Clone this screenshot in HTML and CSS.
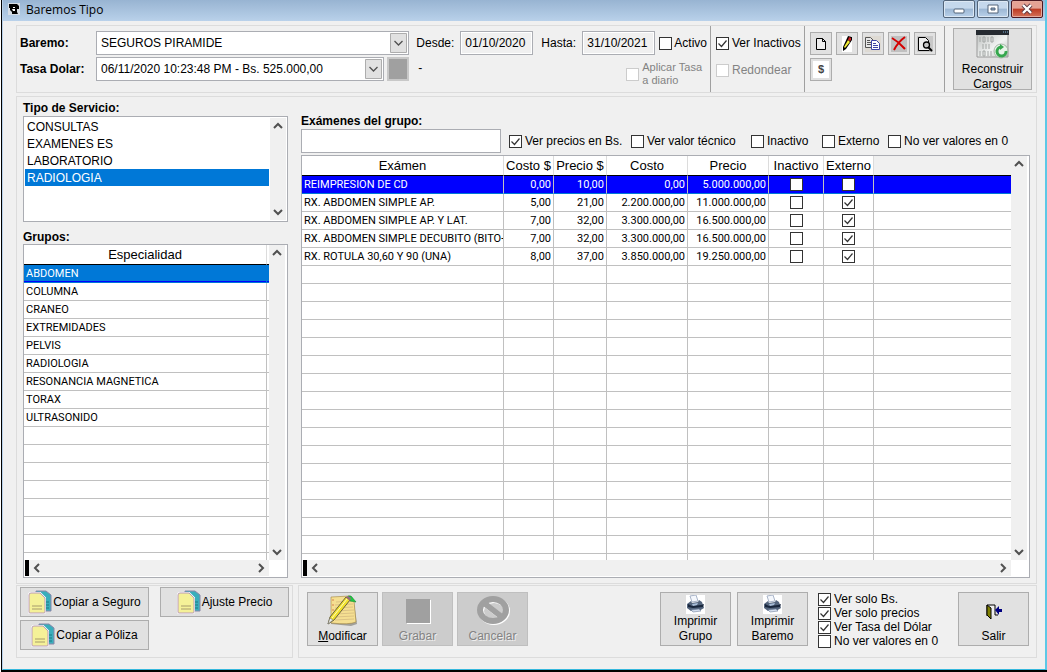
FILE: index.html
```html
<!DOCTYPE html>
<html lang="es">
  <head>
    <meta charset="UTF-8" />
    <meta name="viewport" content="width=device-width, initial-scale=1.0" />
    <title>Baremos Tipo</title>
    <link rel="stylesheet" href="styles.css" />
  </head>
  <body>
    <svg class="simbolos" aria-hidden="true">
      <symbol id="copiar" viewBox="0 0 24 24">
        <path d="M8 1h10l5 4v16H8z" fill="#3aaebb" stroke="#8a86a8" />
        <path d="M18 12h3M18 15h3M18 18h3" stroke="#1c7884" />
        <path d="M1 5q0-2 2-2h9l5 5v14q0 1-1 1H2q-1 0-1-1z" fill="#f5f198" stroke="#fff" stroke-width="2" />
        <path d="M1 5q0-2 2-2h9l5 5v14q0 1-1 1H2q-1 0-1-1z" fill="#f5f198" stroke="#b99bb5" />
        <path d="M4 16h10M4 19h10" stroke="#a79b6c" />
      </symbol>
      <symbol id="impresora" viewBox="0 0 19 19">
        <path fill="#fff" d="M0 0h19v19H0z" />
        <path d="M4 1l6-1 2 6-6 1z" fill="#f4f7fc" stroke="#a9b4c8" />
        <path d="M1 9l4-3 1 2 6-1 1-2 3 2 2 6-5 3H5l-4-3z" fill="#53647c" />
        <path d="M2 9l4 2 9-1 3-1-1 3-10 1-5-1z" fill="#18263c" />
        <path d="M6 9l6-1-1 2-4 1z" fill="#a8bdd8" />
        <path d="M5 15l8-1 2 2-8 1z" fill="#d7e1f0" stroke="#71829c" stroke-width=".6" />
      </symbol>
      <symbol id="arriba" viewBox="0 0 16 16"><path d="M4 10l4-4 4 4" fill="none" stroke="#505050" stroke-width="2" /></symbol>
      <symbol id="abajo" viewBox="0 0 16 16"><path d="M4 6l4 4 4-4" fill="none" stroke="#505050" stroke-width="2" /></symbol>
      <symbol id="izquierda" viewBox="0 0 16 16"><path d="M10 4L6 8l4 4" fill="none" stroke="#505050" stroke-width="2" /></symbol>
      <symbol id="derecha" viewBox="0 0 16 16"><path d="M6 4l4 4-4 4" fill="none" stroke="#505050" stroke-width="2" /></symbol>
    </svg>

    <div class="ventana">
      <header class="titulo">
        <svg width="12" height="12" viewBox="0 0 12 12" aria-hidden="true">
          <path fill="#d6dde5" d="M0 0h12v12H0z" />
          <path d="M1 1h8l2 2v3H9v3l1 2H4V9L2 7V5H1z" fill="#000" />
          <path d="M5 4h2v1H5zM4 6h3v2H5z" fill="#fff" />
        </svg>
        <h1>Baremos Tipo</h1>
        <button class="control" aria-label="Minimizar">
          <svg width="12" height="12" viewBox="0 0 12 12"><rect x="1" y="6" width="10" height="4" rx="1" fill="#fff" stroke="#53657a" /></svg>
        </button>
        <button class="control" aria-label="Maximizar">
          <svg width="12" height="12" viewBox="0 0 12 12"><path d="M1 2h10v8H1z" fill="#fff" stroke="#53657a" /><path d="M4 5h4v2H4z" fill="#8fa9c6" stroke="#53657a" /></svg>
        </button>
        <button class="control cerrar" aria-label="Cerrar">
          <svg width="12" height="12" viewBox="0 0 12 12"><path d="M2 2l8 8M10 2l-8 8" stroke="#5b3640" stroke-width="4" /><path d="M2 2l8 8M10 2l-8 8" stroke="#fff" stroke-width="2.400" /></svg>
        </button>
      </header>

      <main>
        <section class="panel superior">
          <div class="filtros">
            <label class="negrita" for="baremo">Baremo:</label>
            <select id="baremo"><option>SEGUROS PIRAMIDE</option></select>
            <div class="fechas">
              <label for="desde">Desde:</label>
              <input type="text" id="desde" value="01/10/2020" />
              <label for="hasta">Hasta:</label>
              <input type="text" id="hasta" value="31/10/2021" />
              <label class="check"><input type="checkbox" />Activo</label>
            </div>
            <label class="negrita" for="tasa">Tasa Dolar:</label>
            <div class="tasa">
              <select id="tasa"><option>06/11/2020 10:23:48 PM - Bs. 525.000,00</option></select>
              <button class="cuadro" aria-label="Tasa" disabled></button>
            </div>
            <div class="aplicar">
              <span>-</span>
              <label class="check pequeno"><input type="checkbox" disabled /><span>Aplicar Tasa<br />a diario</span></label>
            </div>
          </div>
          <div class="opciones">
            <label class="check"><input type="checkbox" checked />Ver Inactivos</label>
            <label class="check inhabilitado"><input type="checkbox" disabled />Redondear</label>
          </div>
          <div class="herramientas">
            <button aria-label="Nuevo">
              <svg width="16" height="16" viewBox="0 0 16 16"><path d="M3.500 2.500h6l3 3v8h-9z" fill="#eee" stroke="#000" /><path d="M9.500 2.500v3h3" fill="none" stroke="#000" /></svg>
            </button>
            <button aria-label="Editar">
              <svg width="16" height="16" viewBox="0 0 16 16"><path fill="#fff" d="M3 0h10v16H3z" /><path d="M9 0l4 1v3l-6 9-3 2V11z" fill="#000" /><path d="M9 4l2 2-5 6-1-1z" fill="#f3ee37" /><path d="M10 1l2 1v2l-1 1-2-1z" fill="#d32020" /></svg>
            </button>
            <button aria-label="Copiar">
              <svg width="16" height="16" viewBox="0 0 16 16"><path fill="#dedad3" d="M0 0h16v16H0z" /><path d="M.5 1.500h5l3 3v7h-8z" fill="#e8e8e8" stroke="#555" /><path d="M2 4.500h3M2 6.500h4M2 8.500h4" stroke="#555" /><path d="M6.500 4.500h5l3 3v6h-8z" fill="#fff" stroke="#3e46a5" /><path d="M8 7.500h3M8 9.500h5M8 11.500h5" stroke="#3e46a5" /></svg>
            </button>
            <button aria-label="Eliminar">
              <svg width="16" height="16" viewBox="0 0 16 16"><path fill="#c0c0c0" d="M0 0h16v16H0z" /><path d="M1 2q7 4 13 11M14 1Q7 6 3 14" fill="none" stroke="#d40000" stroke-width="2" /></svg>
            </button>
            <button aria-label="Buscar">
              <svg width="16" height="16" viewBox="0 0 16 16"><path fill="#c8c8c8" d="M0 0h16v16H0z" /><path d="M12.500 14.500h-11v-13h7l3 3v2" fill="#eee" stroke="#000" /><circle cx="9.500" cy="9" r="3" fill="#c8c8c8" stroke="#000" stroke-width="1.300" /><path d="M11 11l4 4" stroke="#000" stroke-width="2" /></svg>
            </button>
            <button class="dolar">$</button>
          </div>
          <div class="reconstruir">
            <button class="boton">
              <svg width="33" height="29" viewBox="0 0 33 29" aria-hidden="true">
                <defs><linearGradient id="gris" x2="1" y2="1"><stop stop-color="#b9bcbb" /><stop offset=".6" stop-color="#f1f3f2" /><stop offset="1" stop-color="#bbb" /></linearGradient></defs>
                <path d="M1 1h31v26H1z" fill="url(#gris)" stroke="#999" />
                <path d="M0 0h33v5H0z" fill="#252a30" />
                <path d="M27 2h1M29 2h1M31 2h1" stroke="#7fb2d8" />
                <path d="M4 7v5M7 7h2v5H7zM12 7v5M15 7h2v5h-2zM7 14v5M10 14v5M13 14v5M4 21v5M7 21h2v5H7zM12 21v5M15 21v5" fill="none" stroke="#a2a6a4" />
                <circle cx="25" cy="21" r="7" fill="#e7f3e8" stroke="#a5b5a6" />
                <path d="M25 17a4.500 4.500 0 1 0 5 4" fill="none" stroke="#35a74d" stroke-width="3" />
                <path d="M24 14l4 3-4 3z" fill="#35a74d" />
              </svg>
              <span>Reconstruir<br />Cargos</span>
            </button>
          </div>
        </section>

        <section class="panel central">
          <div class="izquierda">
            <label class="negrita" for="servicio">Tipo de Servicio:</label>
            <div class="lista">
              <select id="servicio" size="6">
                <option>CONSULTAS</option>
                <option>EXAMENES ES</option>
                <option>LABORATORIO</option>
                <option selected>RADIOLOGIA</option>
              </select>
              <div class="barra vertical">
                <button aria-label="Subir"><svg><use href="#arriba" /></svg></button>
                <button aria-label="Bajar"><svg><use href="#abajo" /></svg></button>
              </div>
            </div>
            <h2 class="negrita grupos">Grupos:</h2>
            <div class="rejilla">
              <div class="cuerpo">
                <table id="tablaGrupos">
                  <colgroup><col /><col class="margen" /></colgroup>
                  <thead><tr><th>Especialidad</th><td></td></tr></thead>
                  <tbody></tbody>
                </table>
              </div>
              <div class="barra vertical">
                <button aria-label="Subir"><svg><use href="#arriba" /></svg></button>
                <button aria-label="Bajar"><svg><use href="#abajo" /></svg></button>
              </div>
              <div class="barra horizontal">
                <button aria-label="Izquierda"><svg><use href="#izquierda" /></svg></button>
                <button aria-label="Derecha"><svg><use href="#derecha" /></svg></button>
              </div>
            </div>
          </div>

          <div class="derecha">
            <label class="negrita" for="buscar">Exámenes del grupo:</label>
            <div class="busqueda">
              <input type="text" id="buscar" />
              <label class="check precios"><input type="checkbox" checked />Ver precios en Bs.</label>
              <label class="check tecnico"><input type="checkbox" />Ver valor técnico</label>
              <label class="check inactivo"><input type="checkbox" />Inactivo</label>
              <label class="check externo"><input type="checkbox" />Externo</label>
              <label class="check"><input type="checkbox" />No ver valores en 0</label>
            </div>
            <div class="rejilla">
              <div class="cuerpo">
                <table id="tablaExamenes">
                  <colgroup>
                    <col class="c-examen" /><col class="c-costo" /><col class="c-precio" /><col class="c-monto" />
                    <col class="c-monto" /><col class="c-inactivo" /><col class="c-externo" /><col />
                  </colgroup>
                  <thead>
                    <tr><th>Exámen</th><th>Costo $</th><th>Precio $</th><th>Costo</th><th>Precio</th><th>Inactivo</th><th>Externo</th><td class="vacio"></td></tr>
                  </thead>
                  <tbody></tbody>
                </table>
              </div>
              <div class="barra vertical">
                <button aria-label="Subir"><svg><use href="#arriba" /></svg></button>
                <button aria-label="Bajar"><svg><use href="#abajo" /></svg></button>
              </div>
              <div class="barra horizontal">
                <button aria-label="Izquierda"><svg><use href="#izquierda" /></svg></button>
                <button aria-label="Derecha"><svg><use href="#derecha" /></svg></button>
              </div>
            </div>
          </div>
        </section>

        <footer>
          <div class="panel copias">
            <button class="boton"><svg width="24" height="24"><use href="#copiar" /></svg>Copiar a Seguro</button>
            <button class="boton"><svg width="24" height="24"><use href="#copiar" /></svg>Ajuste Precio</button>
            <button class="boton"><svg width="24" height="24"><use href="#copiar" /></svg>Copiar a Póliza</button>
          </div>
          <div class="panel acciones">
            <button class="boton">
              <svg width="32" height="32" viewBox="0 0 32 32" aria-hidden="true">
                <path d="M5 3l20-1 2 5 3 22-6 2-20-2z" fill="#77756b" opacity=".6" />
                <path d="M4 2l19-1 4 5 2 21q-7 3-25 1z" fill="#f5df91" stroke="#a18540" stroke-width=".6" />
                <path d="M9 7l16-1M8 10l18-1M8 13l18-1M8 16l19-1M8 19l19-1M8 22l19-1M8 25l19-1" stroke="#dcc383" />
                <path d="M6 4v24" stroke="#d88050" stroke-dasharray="2 3" />
                <path d="M21 1h3l5 6-6-1z" fill="#20c944" stroke="#118c2a" stroke-width=".6" />
                <path d="M1 29l2-7L19 2l4 3L7 25z" fill="#f2e22d" stroke="#686039" />
                <path d="M5 23L20 4" stroke="#fffbc0" />
                <path d="M19 2l2-1 3 2-1 3z" fill="#956a81" />
                <path d="M1 29l2-6 3 2z" fill="#eee" stroke="#777" stroke-width=".6" />
              </svg>
              <span><u>M</u>odificar</span>
            </button>
            <button class="boton" disabled>
              <svg width="32" height="32" viewBox="0 0 32 32" aria-hidden="true"><path d="M5 5h24v24H5z" fill="#fff" /><path d="M4 4h24v24H4z" fill="#a0a0a0" /></svg>
              <span>Grabar</span>
            </button>
            <button class="boton" disabled>
              <svg width="34" height="32" viewBox="0 0 34 32" aria-hidden="true">
                <g fill="none" stroke-width="6"><g stroke="#fff"><ellipse cx="18" cy="16" rx="13" ry="11" /><path d="M9 9l18 14" /></g><g stroke="#a0a0a0"><ellipse cx="17" cy="15" rx="13" ry="11" /><path d="M8 8l18 14" /></g></g>
              </svg>
              <span>Cancelar</span>
            </button>
            <button class="boton imprimir"><svg width="19" height="19"><use href="#impresora" /></svg><span>Imprimir<br />Grupo</span></button>
            <button class="boton"><svg width="19" height="19"><use href="#impresora" /></svg><span>Imprimir<br />Baremo</span></button>
            <div class="vistas">
              <label class="check"><input type="checkbox" checked />Ver solo Bs.</label>
              <label class="check"><input type="checkbox" checked />Ver solo precios</label>
              <label class="check"><input type="checkbox" checked />Ver Tasa del Dólar</label>
              <label class="check"><input type="checkbox" />No ver valores en 0</label>
            </div>
            <button class="boton salir">
              <svg width="16" height="16" viewBox="0 0 16 16" aria-hidden="true">
                <path d="M1 12V1h8v10h3" fill="#eee" stroke="#000" />
                <path d="M1 1l4 3v11l-4-4z" fill="#808000" stroke="#000" />
                <path d="M9 6l4-4v3h3v3h-3v3z" fill="#000080" />
              </svg>
              <span>Salir</span>
            </button>
          </div>
        </footer>
      </main>
    </div>

    <script>
      const grupos = ["ABDOMEN", "COLUMNA", "CRANEO", "EXTREMIDADES", "PELVIS", "RADIOLOGIA", "RESONANCIA MAGNETICA", "TORAX", "ULTRASONIDO"];

      const examenes = [
        ["REIMPRESION DE CD", "0,00", "10,00", "0,00", "5.000.000,00", false, false],
        ["RX. ABDOMEN SIMPLE AP.", "5,00", "21,00", "2.200.000,00", "11.000.000,00", false, true],
        ["RX. ABDOMEN SIMPLE AP. Y LAT.", "7,00", "32,00", "3.300.000,00", "16.500.000,00", false, true],
        ["RX. ABDOMEN SIMPLE DECUBITO (BITO+", "7,00", "32,00", "3.300.000,00", "16.500.000,00", false, true],
        ["RX. ROTULA 30,60 Y 90 (UNA)", "8,00", "37,00", "3.850.000,00", "19.250.000,00", false, true],
      ];

      // Llena la tabla y completa con filas vacias hasta el fondo
      function llenar(selector, datos, columnas, total) {
        const tbody = document.querySelector(selector + " tbody");
        for (let i = 0; i < total; i++) {
          const fila = tbody.insertRow();
          for (let j = 0; j < columnas; j++) {
            const celda = fila.insertCell();
            const valor = datos[i] ? datos[i][j] : undefined;
            if (typeof valor === "boolean") {
              const caja = document.createElement("input");
              caja.type = "checkbox";
              caja.checked = valor;
              caja.setAttribute("aria-label", (j == 5 ? "Inactivo " : "Externo ") + datos[i][0]);
              celda.appendChild(caja);
            } else if (valor) {
              celda.textContent = valor;
            }
          }
        }
        tbody.rows[0].className = "seleccionada";
      }

      llenar("#tablaGrupos", grupos.map((g) => [g]), 2, 60);
      llenar("#tablaExamenes", examenes, 8, 60);
    </script>
  </body>
</html>
```

FILE: styles.css
```css
* {
  box-sizing: border-box;
  margin: 0;
  padding: 0;
}

body {
  background-color: #000;
  border-left: 1px solid #fff;
  padding: 0 0 2px 1px;
  font-family: "Liberation Sans", Arial, sans-serif;
  font-size: 12px;
  line-height: 15px;
  color: #000;
}

button,
input,
select {
  font: inherit;
  color: inherit;
  border-radius: 0;
}

svg {
  display: block;
  flex: none;
}

.simbolos {
  display: none;
}

.ventana {
  display: flex;
  flex-direction: column;
  height: calc(100vh - 2px);
  min-height: 500px;
  background-color: #f0f0f0;
  border: 1px solid #b9d1ea;
  border-top: none;
  border-right: 2px solid #5cc8e6;
  border-bottom: 1px solid #35b8dd;
}

/* ---------BARRA DE TITULO------------*/

.titulo {
  display: flex;
  align-items: flex-start;
  gap: 2px;
  height: 21px;
  padding: 0 2px 0 5px;
  background: linear-gradient(#98b4d2, #b9d1ea);
}

.titulo > svg {
  margin-top: 3px;
}

.titulo h1 {
  flex: 1;
  padding-left: 4px;
  font-family: "Open Sans", sans-serif;
  font-size: 12px;
  font-weight: 400;
  line-height: 20px;
}

.control {
  display: flex;
  align-items: center;
  justify-content: center;
  width: 32px;
  height: 18px;
  background: linear-gradient(#c5d8ec 45%, #9cb7d4 50%, #b9d1ea);
  border: 1px solid #53657a;
  border-radius: 2px;
  box-shadow: inset 0 0 0 1px #dce8f4;
}

.cerrar {
  background: linear-gradient(#e5a294 45%, #bd3a22 50%, #d4725a);
  border-color: #4c1720;
  box-shadow: inset 0 0 0 1px #e5a99c;
}

/* ---------CONTROLES------------*/

main {
  flex: 1;
  display: flex;
  flex-direction: column;
  min-height: 0;
  padding: 4px 8px 11px 13px;
}

.panel {
  border: 1px solid #dcdcdc;
}

.negrita {
  font-size: 12px;
  font-weight: 700;
}

input[type="checkbox"] {
  appearance: none;
  flex: none;
  width: 13px;
  height: 13px;
  background: #fff;
  border: 1px solid #333;
}

input[type="checkbox"]:checked {
  background: #fff url("data:image/svg+xml,%3Csvg xmlns='http://www.w3.org/2000/svg' width='11' height='11'%3E%3Cpath d='M1.5 5.5l3 3 5-6' fill='none' stroke='%23333' stroke-width='1.2'/%3E%3C/svg%3E");
}

input[type="checkbox"]:disabled {
  border-color: #ccc;
}

input[type="text"] {
  height: 24px;
  background-color: #fff;
  border: 1px solid #abadb3;
}

.check {
  display: flex;
  align-items: center;
  gap: 3px;
  white-space: nowrap;
}

.boton {
  display: flex;
  align-items: center;
  justify-content: center;
  background-color: #e1e1e1;
  border: 1px solid #adadad;
  white-space: nowrap;
}

.boton:disabled {
  background-color: #ccc;
  border-color: #bfbfbf;
  color: #838383;
  text-shadow: 1px 1px #eee;
}

/* ---------PANEL SUPERIOR------------*/

.superior {
  display: flex;
}

.filtros {
  flex: 1;
  display: grid;
  grid-template-columns: 69px 1fr auto;
  gap: 2px 7px;
  align-items: start;
  align-content: start;
  padding: 5px 3px 0;
}

.filtros > .negrita {
  line-height: 24px;
}

.filtros select {
  appearance: none;
  width: 100%;
  height: 24px;
  padding: 0 24px 0 4px;
  background: #fff url("data:image/svg+xml,%3Csvg xmlns='http://www.w3.org/2000/svg' width='17' height='20'%3E%3Cpath d='M.5.5h16v19H.5z' fill='%23e1e1e1' stroke='%23adadad'/%3E%3Cpath d='M4.5 8l4 4 4-4' fill='none' stroke='%23505050' stroke-width='1.3'/%3E%3C/svg%3E") no-repeat right 1px center;
  border: 1px solid #abadb3;
}

.fechas {
  display: flex;
  align-items: center;
}

.fechas > label:first-child {
  width: 44px;
}

.fechas > label:nth-of-type(2) {
  width: 41px;
  margin-left: 8px;
}

.fechas input[type="text"] {
  width: 73px;
  padding-left: 4px;
  background-color: #f0f0f0;
  box-shadow: inset 0 0 0 1px #fff;
}

.fechas .check {
  margin-left: 4px;
  gap: 2px;
}

.tasa {
  display: flex;
  gap: 3px;
}

.cuadro {
  flex: none;
  width: 22px;
  height: 24px;
  background-color: #a0a0a0;
  border: 2px solid #c8c8c8;
}

.aplicar {
  display: flex;
  justify-content: space-between;
  padding: 4px 5px 0 2px;
}

.pequeno {
  font-size: 11px;
  line-height: 13px;
  color: #838383;
}

.opciones {
  display: flex;
  flex-direction: column;
  gap: 12px;
  width: 94px;
  padding: 10px 0 0 5px;
  border-left: 1px solid #a0a0a0;
}

.inhabilitado {
  color: #838383;
}

.herramientas {
  display: flex;
  flex-wrap: wrap;
  align-content: flex-start;
  gap: 3px 4px;
  width: 140px;
  padding: 6px 3px 0 5px;
  border-left: 1px solid #a0a0a0;
}

.herramientas button {
  display: flex;
  align-items: center;
  justify-content: center;
  width: 22px;
  height: 23px;
  background-color: #e1e1e1;
  border: 1px solid #adadad;
}

.herramientas .dolar {
  background-color: #fff;
  box-shadow: inset 0 0 0 2px #e1e1e1;
  font-size: 11px;
  font-weight: 700;
  color: #444;
}

.reconstruir {
  padding: 2px 4px 2px 8px;
  border-left: 1px solid #a0a0a0;
}

.reconstruir .boton {
  flex-direction: column;
  justify-content: flex-start;
  gap: 3px;
  width: 79px;
  height: 62px;
  padding-top: 1px;
}

/* ---------PANEL CENTRAL------------*/

.central {
  flex: 1;
  display: flex;
  gap: 13px;
  min-height: 0;
  margin-top: 3px;
  padding: 4px 6px 5px;
}

.izquierda {
  display: flex;
  flex-direction: column;
  width: 265px;
}

.lista {
  display: flex;
  flex: none;
  height: 106px;
  padding: 1px;
  background-color: #fff;
  border: 1px solid #abadb3;
}

.lista select {
  flex: 1;
  margin-right: 1px;
  overflow: hidden;
  border: none;
  outline: none;
}

.lista option {
  min-height: 17px;
  padding: 2px 2px 0;
}

.lista option:checked {
  background: #0078d7 linear-gradient(#0078d7, #0078d7);
  color: #fff;
}

.grupos {
  margin-top: 8px;
  line-height: 14px;
}

.derecha {
  flex: 1;
  display: flex;
  flex-direction: column;
  min-width: 0;
  padding-top: 13px;
}

.busqueda {
  display: flex;
  align-items: center;
  margin-bottom: 2px;
}

#buscar {
  flex: 0 1 200px;
  min-width: 80px;
  margin-right: 8px;
}

.precios {
  width: 122px;
}

.tecnico {
  width: 120px;
}

.inactivo {
  width: 71px;
}

.externo {
  width: 66px;
}

.rejilla {
  flex: 1;
  display: grid;
  grid-template-columns: 1fr 16px;
  grid-template-rows: 1fr 16px;
  min-height: 0;
  padding: 0 2px 1px 0;
  background-color: #fff;
  border: 1px solid #abadb3;
}

.cuerpo {
  min-height: 0;
  overflow: hidden;
}

.barra {
  display: flex;
  justify-content: space-between;
  background-color: #f0f0f0;
}

.barra button {
  width: 16px;
  height: 16px;
  background: none;
  border: none;
}

.barra svg {
  width: 16px;
  height: 16px;
}

.vertical {
  flex-direction: column;
  width: 16px;
}

.horizontal {
  margin-left: 1px;
  border-left: 4px solid #000;
}

/* ---------TABLAS------------*/

table {
  width: 100%;
  table-layout: fixed;
  border-collapse: separate;
  border-spacing: 0;
}

th {
  height: 20px;
  font-size: 13px;
  font-weight: 400;
  line-height: 19px;
  white-space: nowrap;
  border-right: 1px solid #dcdcdc;
}

thead th,
thead td {
  border-bottom: 1px solid #000;
}

.vacio {
  background-color: #f0f0f0;
}

tbody td {
  height: 18px;
  padding: 0 2px;
  overflow: hidden;
  font-family: Roboto, sans-serif;
  font-size: 11px;
  line-height: 17px;
  white-space: nowrap;
  border-right: 1px solid #c0c0c0;
  border-bottom: 1px solid #c0c0c0;
}

tbody td:last-child {
  border-right: none;
}

#tablaExamenes td:first-child {
  padding-right: 0;
}

td input {
  display: block;
  margin: 0 auto;
}

.margen {
  width: 2px;
}

#tablaGrupos tbody td:last-child {
  padding: 0;
}

#tablaGrupos .seleccionada td {
  background-color: #0078d7;
  border-color: #0078d7;
  box-shadow: inset 0 -1px #0000ff;
  color: #fff;
}

#tablaExamenes td:nth-child(n + 2) {
  text-align: right;
}

#tablaExamenes .seleccionada td {
  background-color: #0000ff;
  border-bottom-color: #0078d7;
  color: #fff;
}

.c-examen {
  width: 202px;
}

.c-costo,
.c-externo {
  width: 50px;
}

.c-precio {
  width: 53px;
}

.c-monto {
  width: 81px;
}

.c-inactivo {
  width: 55px;
}

/* ---------PANEL INFERIOR------------*/

footer {
  display: flex;
  gap: 5px;
  margin-top: 1px;
}

.copias {
  display: grid;
  grid-template-columns: 129px 129px;
  gap: 3px 11px;
  align-content: start;
  width: 277px;
  padding: 1px 3px;
}

.copias .boton {
  height: 30px;
  gap: 1px;
}

.acciones {
  flex: 1;
  display: flex;
  align-items: flex-start;
  gap: 4px;
  padding: 6px 7px 9px 8px;
}

.acciones .boton {
  flex-direction: column;
  justify-content: space-between;
  width: 71px;
  height: 54px;
  padding: 2px 0 1px;
}

.acciones .imprimir {
  margin-left: auto;
  margin-right: 2px;
}

.vistas {
  width: 142px;
  padding-left: 6px;
}

.vistas .check {
  height: 14px;
}

.acciones .salir {
  padding-top: 11px;
}
```
